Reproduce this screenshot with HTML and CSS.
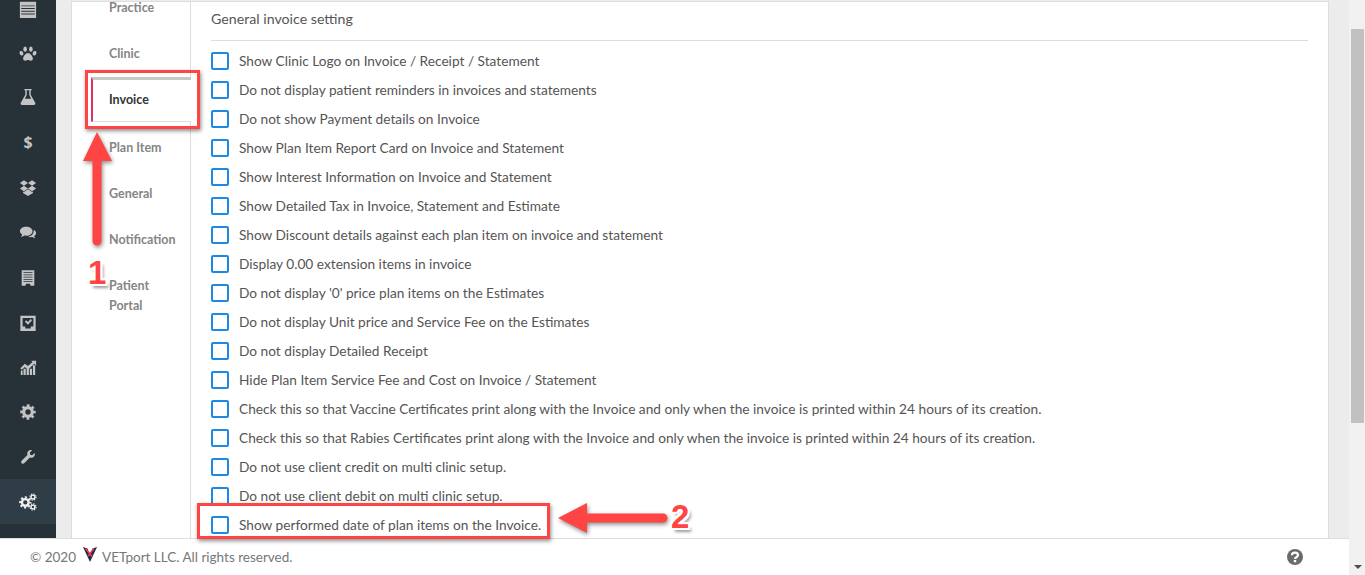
FILE: index.html
```html
<!DOCTYPE html>
<html lang="en">
<head>
  <meta charset="UTF-8" />
  <title>Invoice Settings - VETport</title>
  <link rel="stylesheet" href="styles.css">
</head>
<body>
  <div class="app">
    <div class="page">
      <div class="main">
        <nav class="sidebar">
          <a class="side-item"><svg viewBox="0 0 20 20"><path fill-rule="evenodd" d="M1 2h18v18H1zM2.500 6v1h15V6zM2.500 9v1h15V9zM2.500 12v1h15v-1zM2.500 15v1h15v-1z"/></svg></a>
          <a class="side-item"><svg viewBox="0 0 20 20"><ellipse cx="6.800" cy="4.600" rx="2" ry="2.900"/><ellipse cx="13.200" cy="4.600" rx="2" ry="2.900"/><ellipse cx="2.700" cy="9.200" rx="2" ry="2.600" transform="rotate(-18 2.700 9.200)"/><ellipse cx="17.300" cy="9.200" rx="2" ry="2.600" transform="rotate(18 17.300 9.200)"/><path d="M10 9c2.400 0 5.400 3.600 5.400 6.200 0 1.600-1.300 2.200-2.600 2.200-1.100 0-1.800-.6-2.800-.6s-1.700.6-2.800.6c-1.300 0-2.600-.6-2.600-2.200C4.600 12.600 7.600 9 10 9z"/></svg></a>
          <a class="side-item side-up"><svg viewBox="0 0 20 20"><path fill-rule="evenodd" d="M6 1h8v1.500h-1v5l5 9c.6 1.200 0 2.500-1.500 2.500h-13C2 19 1.400 17.700 2 16.500l5-9v-5H6zM8.600 2.500v5.400L6.500 12h7l-2.100-4.100V2.500z"/></svg></a>
          <a class="side-item side-glyph side-up">$</a>
          <a class="side-item"><svg viewBox="0 0 20 20"><path d="M5.500 1.500 10 4.500 5.500 7.500 1 4.500zM14.500 1.500 19 4.500l-4.500 3-4.500-3zM5.500 7.500l4.500 3-4.500 3-4.500-3zM14.500 7.500l4.500 3-4.500 3-4.500-3zM5.500 14.500l4.500-3 4.500 3 1-.6V15.500L10 19l-5.500-3.500v-1.600z"/></svg></a>
          <a class="side-item"><svg viewBox="0 0 20 20"><path d="M8 3c4 0 7 2.200 7 5s-3 5-7 5c-.7 0-1.300-.1-1.900-.2C5 13.700 3.500 14.200 2 14.300c.8-.8 1.400-1.700 1.500-2.700C2 10.700 1 9.400 1 8c0-2.800 3-5 7-5z"/><path d="M16.300 6.300C18 7.100 19 8.500 19 10c0 1.300-.8 2.500-2 3.300.1.900.6 1.700 1.200 2.400-1.200-.1-2.400-.5-3.300-1.200-.6.100-1.200.2-1.800.2-1.300 0-2.500-.3-3.500-.8 4.200-.1 7-2.700 6.700-7.600z"/></svg></a>
          <a class="side-item"><svg viewBox="0 0 20 20"><path fill-rule="evenodd" d="M3 1.500h14v17h-4l-1-2H8l-1 2H3zM5 3.500v1h10v-1zM5 6v1h10V6zM5 8.500v1h10v-1zM5 11v1h10v-1zM5 13.500v1h10v-1z"/></svg></a>
          <a class="side-item"><svg viewBox="0 0 20 20"><path fill-rule="evenodd" d="M1.500 2h17v17h-17zM4 4.500V14h3v2h6v-2h3V4.500z"/><path d="M6.500 8.500 8 7l2 2 3-3.500 1.500 1.500-4.500 5z"/></svg></a>
          <a class="side-item"><svg viewBox="0 0 20 20"><path d="M2 14h2v5H2zM5 12h2.500v7H5zM8.500 11H11v8H8.500zM12 12h2.500v7H12zM15.500 8H18v11h-2.500zM1.500 11.500l5-5 3.500 2.500 5-4.500L13.500 3H19v5.500L17 6.500l-7 6.500-3.500-3L3 13z"/></svg></a>
          <a class="side-item"><svg viewBox="0 0 20 20"><circle cx="10" cy="10" r="4.800" fill="none" stroke="currentColor" stroke-width="3.600"/><circle cx="10" cy="10" r="7.300" fill="none" stroke="currentColor" stroke-width="2.600" stroke-dasharray="3 2.730" stroke-dashoffset="1.500"/></svg></a>
          <a class="side-item"><svg viewBox="0 0 20 20"><path d="M17.500 5.500c.5 2-.2 3.800-1.800 4.800-1.200.7-2.500.7-3.600.3l-6.100 6.200c-.9.900-2.200.9-3 .1s-.8-2.100.1-3l6.300-6.100c-.4-1.100-.4-2.400.3-3.600 1-1.600 2.800-2.300 4.800-1.800L12 5.400l.5 2.100 2.100.5z"/></svg></a>
          <a class="side-item side-active"><svg viewBox="0 0 20 20"><circle cx="7" cy="10.500" r="3.700" fill="none" stroke="currentColor" stroke-width="2.600"/><circle cx="7" cy="10.500" r="5.700" fill="none" stroke="currentColor" stroke-width="2.200" stroke-dasharray="2.400 2.070" stroke-dashoffset="1.200"/><circle cx="15.500" cy="4.500" r="2.100" fill="none" stroke="currentColor" stroke-width="1.500"/><circle cx="15.500" cy="4.500" r="3.400" fill="none" stroke="currentColor" stroke-width="1.300" stroke-dasharray="1.500 1.170"/><circle cx="15.500" cy="15.500" r="2.100" fill="none" stroke="currentColor" stroke-width="1.500"/><circle cx="15.500" cy="15.500" r="3.400" fill="none" stroke="currentColor" stroke-width="1.300" stroke-dasharray="1.500 1.170"/></svg></a>
        </nav>

        <div class="content">
          <div class="panel">
            <ul class="tabs">
              <li>Practice</li>
              <li>Clinic</li>
              <li class="tab-active">Invoice</li>
              <li>Plan Item</li>
              <li>General</li>
              <li>Notification</li>
              <li>Patient<br>Portal</li>
            </ul>

            <div class="settings">
              <h2>General invoice setting</h2>
              <label class="check-row"><span class="box"></span>Show Clinic Logo on Invoice / Receipt / Statement</label>
              <label class="check-row"><span class="box"></span>Do not display patient reminders in invoices and statements</label>
              <label class="check-row"><span class="box"></span>Do not show Payment details on Invoice</label>
              <label class="check-row"><span class="box"></span>Show Plan Item Report Card on Invoice and Statement</label>
              <label class="check-row"><span class="box"></span>Show Interest Information on Invoice and Statement</label>
              <label class="check-row"><span class="box"></span>Show Detailed Tax in Invoice, Statement and Estimate</label>
              <label class="check-row"><span class="box"></span>Show Discount details against each plan item on invoice and statement</label>
              <label class="check-row"><span class="box"></span>Display 0.00 extension items in invoice</label>
              <label class="check-row"><span class="box"></span>Do not display '0' price plan items on the Estimates</label>
              <label class="check-row"><span class="box"></span>Do not display Unit price and Service Fee on the Estimates</label>
              <label class="check-row"><span class="box"></span>Do not display Detailed Receipt</label>
              <label class="check-row"><span class="box"></span>Hide Plan Item Service Fee and Cost on Invoice / Statement</label>
              <label class="check-row"><span class="box"></span>Check this so that Vaccine Certificates print along with the Invoice and only when the invoice is printed within 24 hours of its creation.</label>
              <label class="check-row"><span class="box"></span>Check this so that Rabies Certificates print along with the Invoice and only when the invoice is printed within 24 hours of its creation.</label>
              <label class="check-row"><span class="box"></span>Do not use client credit on multi clinic setup.</label>
              <label class="check-row"><span class="box"></span>Do not use client debit on multi clinic setup.</label>
              <label class="check-row"><span class="box"></span>Show performed date of plan items on the Invoice.</label>
            </div>
          </div>
        </div>
      </div>

      <footer class="footer">
        <span>&copy; 2020</span>
        <svg class="logo" viewBox="0 0 14 15"><path fill="#1d2a4d" d="M0 0l4.500 1.500L7 9l2.500-7.500L14 0 7 15z"/><path fill="none" stroke="#e8394a" stroke-width="1.600" d="M2.500 1.500 9.500 10M11 1.500 5 9"/></svg>
        <span>VETport LLC. All rights reserved.</span>
        <svg class="help" viewBox="0 0 16 16"><circle cx="8" cy="8" r="8" fill="#6b6b6b"/><path fill="none" stroke="#fff" stroke-width="2.200" d="M5 6.200C5 4.600 6.300 3.700 8 3.700s3 .9 3 2.400c0 2.100-3 2.100-3 4"/><rect x="6.800" y="11" width="2.400" height="2.300" fill="#fff"/></svg>
      </footer>
    </div>

    <div class="scrollbar">
      <div class="thumb"></div>
      <div class="scroll-down"></div>
    </div>
  </div>

  <!-- screenshot annotations -->
  <div class="mark mark-tab"></div>
  <div class="mark mark-row"></div>
  <svg class="arrows" viewBox="0 0 1365 575">
    <path d="M97 132l15 29h-10.500v80a4.500 4.500 0 0 1-9 0v-80H83z"/>
    <path d="M558 518l29-15v10.500h76a4.500 4.500 0 0 1 0 9h-76V533z"/>
  </svg>
  <span class="step step-one">1</span>
  <span class="step step-two">2</span>
</body>
</html>
```

FILE: styles.css
```css
html, body {
  margin: 0;
  height: 575px;
  overflow: hidden;
}
body {
  font-family: Lato, 'Liberation Sans', sans-serif;
  font-size: 13.700px;
  color: #555;
  background: #fff;
}
.app {
  display: flex;
  height: 575px;
}
.page {
  flex: 1;
  display: flex;
  flex-direction: column;
  min-width: 0;
}
.main {
  display: flex;
  height: 538px;
  overflow: hidden;
}

/* left icon rail */
.sidebar {
  width: 56px;
  flex: none;
  background: #263238;
  display: flex;
  flex-direction: column;
  margin-top: -13px;
  height: 551px;
}
.side-item {
  height: 44.750px;
  flex: none;
  display: flex;
  align-items: center;
  justify-content: center;
  color: #c4c4c4;
  fill: currentColor;
}
.side-item svg {
  width: 18px;
  height: 18px;
}
.side-up {
  box-sizing: border-box;
  padding-bottom: 3px;
}
.side-glyph {
  font-family: 'Open Sans', sans-serif;
  font-weight: 700;
  font-size: 16px;
}
.side-active {
  background: #2f3e46;
  color: #f0f0f0;
}

.content {
  flex: 1;
  background: #ececec;
  padding: 1px 20px 0 15px;
  display: flex;
  min-width: 0;
}
.panel {
  flex: 1;
  display: flex;
  background: #fff;
  border: 1px solid #ddd;
  border-width: 1px 1px 0 1px;
  overflow: hidden;
}

/* settings tabs */
.tabs {
  width: 118px;
  flex: none;
  margin: -17px 0 0;
  padding: 0;
  list-style: none;
  border-right: 1px solid #ddd;
  color: #858585;
  font-weight: 700;
  font-size: 12.500px;
  line-height: 20px;
}
.tabs li {
  padding: 13px 0 13px 37px;
}
.tabs .tab-active {
  margin: 0 -1px 3px 19px;
  padding: 10px 0 11px 16px;
  border-left: 2px solid #d6336c;
  border-top: 3px solid #c8c8c8;
  border-bottom: 1px solid #ddd;
  background: #fff;
  position: relative;
  color: #333;
}

.settings {
  flex: 1;
  padding: 0 20px;
  min-width: 0;
}
.settings h2 {
  margin: 0 0 5px;
  padding: 6px 0 11px;
  border-bottom: 1px solid #ddd;
  font-size: 14.200px;
  font-weight: 400;
  line-height: 21px;
  color: #555;
}
.check-row {
  display: flex;
  align-items: center;
  height: 29px;
  gap: 10px;
  white-space: nowrap;
}
.box {
  width: 14px;
  height: 14px;
  flex: none;
  border: 2px solid #1e88e5;
  border-radius: 2px;
}

.footer {
  flex: 1;
  display: flex;
  align-items: center;
  padding: 0 46px 0 30px;
  background: #fff;
  border-top: 1px solid #ddd;
  color: #777;
  font-size: 13.500px;
}
.logo {
  width: 14px;
  height: 15px;
  margin: -6px 5px 0 7px;
}
.help {
  width: 16px;
  height: 16px;
  margin-left: auto;
}

.scrollbar {
  width: 16px;
  flex: none;
  background: #f1f1f1;
  position: relative;
}
.thumb {
  margin: 29px 1px 0 2px;
  height: 394px;
  background: #c1c1c1;
}
.scroll-down {
  position: absolute;
  left: 5px;
  bottom: 6px;
  border: 4px solid transparent;
  border-bottom: 0;
  border-top: 4px solid #505050;
}

/* annotations on top of the screenshot */
.mark {
  position: absolute;
  border: 3px solid #ff4444;
  box-shadow: 1px 2px 4px rgba(0,0,0,0.45);
  box-sizing: border-box;
}
.mark-tab {
  left: 85px;
  top: 70px;
  width: 115px;
  height: 59px;
}
.mark-row {
  left: 197px;
  top: 503px;
  width: 353px;
  height: 36px;
}
.arrows {
  position: absolute;
  left: 0;
  top: 0;
  width: 1365px;
  height: 575px;
  fill: #ff4444;
  filter: drop-shadow(1px 2px 2px rgba(0,0,0,0.45));
  pointer-events: none;
}
.step {
  position: absolute;
  font-family: 'Liberation Sans', sans-serif;
  font-weight: 700;
  font-size: 33px;
  line-height: 33px;
  color: #ff4444;
  text-shadow: 2px 0 0 #fff, -2px 0 0 #fff, 0 2px 0 #fff, 0 -2px 0 #fff, 2px 2px 0 #fff, -2px 2px 0 #fff, 2px -2px 0 #fff, -2px -2px 0 #fff, 3px 4px 3px rgba(0,0,0,0.4);
}
.step-one {
  left: 88px;
  top: 256px;
}
.step-two {
  left: 671px;
  top: 500px;
}
```
